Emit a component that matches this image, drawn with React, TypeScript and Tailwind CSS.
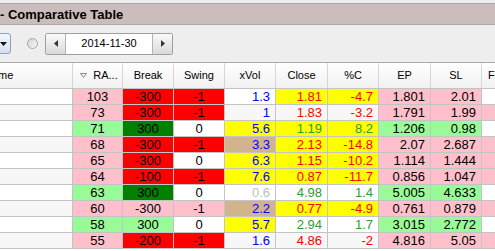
import React from "react";

type Cell = [string, string, string?];

type Row = {
  ra: Cell;
  br: Cell;
  sw: Cell;
  xv: Cell;
  cl: Cell;
  pc: Cell;
  ep: Cell;
  sl: Cell;
  last: string;
};

const BG: Record<string, string> = {
  pk: "bg-[#ffc0cb]",
  rd: "bg-[#ff0000]",
  dg: "bg-[#008000]",
  lg: "bg-[#98fb98]",
  yl: "bg-[#ffff00]",
  tn: "bg-[#d2b48c]",
  wh: "",
};

const FG: Record<string, string> = {
  b: "text-[#0000ff]",
  r: "text-[#ff0000]",
  g: "text-[#339933]",
  s: "text-[#c0c0c0]",
  k: "text-black",
};

const rows: Row[] = [
  { ra: ["103", "pk"], br: ["-300", "rd"], sw: ["-1", "rd"], xv: ["1.3", "wh", "b"], cl: ["1.81", "yl", "r"], pc: ["-4.7", "yl", "r"], ep: ["1.801", "pk"], sl: ["2.01", "pk"], last: "wh" },
  { ra: ["73", "pk"], br: ["-300", "rd"], sw: ["-1", "rd"], xv: ["1", "wh", "b"], cl: ["1.83", "wh", "r"], pc: ["-3.2", "wh", "r"], ep: ["1.791", "pk"], sl: ["1.99", "pk"], last: "pk" },
  { ra: ["71", "lg"], br: ["300", "dg"], sw: ["0", "wh"], xv: ["5.6", "yl", "b"], cl: ["1.19", "yl", "g"], pc: ["8.2", "yl", "g"], ep: ["1.206", "lg"], sl: ["0.98", "lg"], last: "wh" },
  { ra: ["68", "pk"], br: ["-300", "rd"], sw: ["-1", "rd"], xv: ["3.3", "tn", "b"], cl: ["2.13", "yl", "r"], pc: ["-14.8", "yl", "r"], ep: ["2.07", "pk"], sl: ["2.687", "pk"], last: "pk" },
  { ra: ["65", "pk"], br: ["-300", "rd"], sw: ["0", "wh"], xv: ["6.3", "yl", "b"], cl: ["1.15", "yl", "r"], pc: ["-10.2", "yl", "r"], ep: ["1.114", "pk"], sl: ["1.444", "pk"], last: "pk" },
  { ra: ["64", "pk"], br: ["-100", "rd"], sw: ["-1", "rd"], xv: ["7.6", "yl", "b"], cl: ["0.87", "yl", "r"], pc: ["-11.7", "yl", "r"], ep: ["0.856", "pk"], sl: ["1.047", "pk"], last: "pk" },
  { ra: ["63", "lg"], br: ["300", "dg"], sw: ["0", "wh"], xv: ["0.6", "wh", "s"], cl: ["4.98", "wh", "g"], pc: ["1.4", "wh", "g"], ep: ["5.005", "lg"], sl: ["4.633", "lg"], last: "wh" },
  { ra: ["60", "pk"], br: ["-300", "pk"], sw: ["-1", "pk"], xv: ["2.2", "tn", "b"], cl: ["0.77", "yl", "r"], pc: ["-4.9", "yl", "r"], ep: ["0.761", "pk"], sl: ["0.879", "pk"], last: "pk" },
  { ra: ["58", "lg"], br: ["300", "lg"], sw: ["0", "wh"], xv: ["5.7", "yl", "b"], cl: ["2.94", "wh", "g"], pc: ["1.7", "wh", "g"], ep: ["3.015", "lg"], sl: ["2.772", "lg"], last: "wh" },
  { ra: ["55", "pk"], br: ["-200", "rd"], sw: ["-1", "rd"], xv: ["1.6", "wh", "b"], cl: ["4.86", "wh", "r"], pc: ["-2", "wh", "r"], ep: ["4.816", "pk"], sl: ["5.05", "pk"], last: "pk" },
];

const Td = ({ c, w, center }: { c: Cell; w: string; center?: boolean }) => (
  <div
    className={`${w} shrink-0 ${BG[c[1]]} ${FG[c[2] ?? "k"]} h-full border-r border-[#c4c4c4] flex items-center ${
      center ? "justify-center" : "justify-end pr-[5px]"
    }`}
  >
    {c[0]}
  </div>
);

const Th = ({ w, children }: { w: string; children: React.ReactNode }) => (
  <div className={`${w} shrink-0 h-full border-r border-[#d6d6d6] flex items-center justify-center`}>{children}</div>
);

const App = () => {
  return (
    <div className="w-[495px] h-[251px] overflow-hidden bg-[#eeeeee] font-['Liberation_Sans',Arial,sans-serif] text-black">
      <div className="h-[3px]" />
      <div className="h-[22px] border-y border-[#a9a9a9] bg-[#cbbdbc] flex items-center text-[13px] font-bold leading-none">
        - Comparative Table
      </div>

      <div className="h-[38px] border-b border-[#a9a9a9] flex items-center">
        <div className="-ml-[20px] shrink-0 w-[31px] h-[21px] rounded-[3px] border border-[#8ea4bb] bg-gradient-to-b from-[#f3f7fb] to-[#d3e0ec] flex items-center justify-end pr-[3px]">
          <svg width="7" height="4" viewBox="0 0 7 4">
            <path d="M0 0H7L3.5 4Z" fill="#111" />
          </svg>
        </div>
        <div className="ml-[16px] shrink-0 w-[11px] h-[11px] rounded-full border border-[#a6a6a6] bg-gradient-to-br from-[#d4d4d4] to-[#f8f8f8]" />
        <div className="ml-[7px] shrink-0 h-[22px] w-[128px] flex border border-[#a0a0a0] rounded-[2px] bg-white">
          <div className="w-[19px] bg-gradient-to-b from-[#fafafa] to-[#dadada] flex items-center justify-center">
            <svg width="4" height="7" viewBox="0 0 4 7">
              <path d="M4 0V7L0 3.5Z" fill="#333" />
            </svg>
          </div>
          <div className="flex-1 border-x border-[#b4b4b4] flex items-center justify-center text-[11px]">2014-11-30</div>
          <div className="w-[19px] bg-gradient-to-b from-[#fafafa] to-[#dadada] flex items-center justify-center">
            <svg width="4" height="7" viewBox="0 0 4 7">
              <path d="M0 0V7L4 3.5Z" fill="#333" />
            </svg>
          </div>
        </div>
      </div>

      <div className="-ml-[22px] text-[13px] leading-none">
        <div className="h-[26px] flex border-b border-[#c4c4c4] bg-gradient-to-b from-white to-[#f1f1f1] text-[11px]">
          <div className="w-[95px] shrink-0 h-full border-r border-[#d6d6d6] flex items-center pl-[6px]">Name</div>
          <div className="w-[50px] shrink-0 h-full border-r border-[#d6d6d6] flex items-center pl-[7px]">
            <svg width="7" height="5" viewBox="0 0 7 5">
              <path d="M0.5 0.5H6.5L3.5 4.5Z" fill="none" stroke="#8a8a8a" />
            </svg>
            <span className="flex-1 text-center pl-[2px]">RA...</span>
          </div>
          <Th w="w-[51px]">Break</Th>
          <Th w="w-[51px]">Swing</Th>
          <Th w="w-[51px]">xVol</Th>
          <Th w="w-[52px]">Close</Th>
          <Th w="w-[51px]">%C</Th>
          <Th w="w-[52px]">EP</Th>
          <Th w="w-[51px]">SL</Th>
          <div className="w-[60px] shrink-0 h-full flex items-center pl-[6px]">F</div>
        </div>

        {rows.map((r, i) => (
          <div key={i} className={`h-[16px] flex border-b border-[#c4c4c4] ${i % 2 ? "bg-[#f7f7f7]" : "bg-white"}`}>
            <div className="w-[95px] shrink-0 h-full border-r border-[#c4c4c4]" />
            <Td c={r.ra} w="w-[50px]" center />
            <Td c={r.br} w="w-[51px]" center />
            <Td c={r.sw} w="w-[51px]" center />
            <Td c={r.xv} w="w-[51px]" />
            <Td c={r.cl} w="w-[52px]" />
            <Td c={r.pc} w="w-[51px]" />
            <Td c={r.ep} w="w-[52px]" />
            <Td c={r.sl} w="w-[51px]" />
            <div className={`w-[60px] shrink-0 h-full ${BG[r.last]}`} />
          </div>
        ))}
        <div className="h-[16px] bg-white" />
      </div>
    </div>
  );
};

export default App;
